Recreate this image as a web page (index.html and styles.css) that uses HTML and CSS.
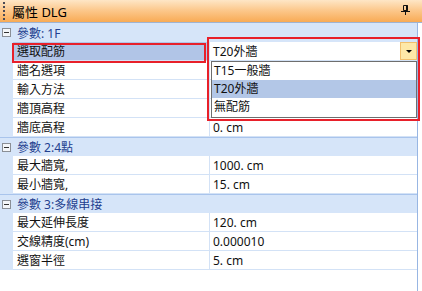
FILE: index.html
```html
<!DOCTYPE html>
<html lang="zh-Hant">
<head>
  <meta charset="UTF-8">
  <title>屬性 DLG</title>
  <link rel="stylesheet" href="styles.css">
</head>
<body>
  <div class="panel">
    <!-- Title Bar -->
    <div class="titlebar">
      <span class="grip"></span>
      <span class="title">屬性 DLG</span>
      <svg class="pin" width="9" height="10" viewBox="0 0 9 10">
        <path d="M2.5 0.5h4v5h-4z" fill="none" stroke="#111" stroke-width="1"/>
        <path d="M5 0v6h1.5V0z" fill="#111"/>
        <path d="M0 6h9v1H0z" fill="#111"/>
        <path d="M4 7h1v3H4z" fill="#111"/>
      </svg>
    </div>

    <!-- Property Grid -->
    <div class="grid">
      <div class="cat"><span class="toggle"></span><span class="cat-name">參數: 1F</span></div>
      <div class="row">
        <div class="gutter"></div>
        <div class="name selected">選取配筋</div>
        <div class="value combo">
          <span class="combo-text">T20外牆</span>
          <span class="combo-btn"><span class="arrow"></span></span>
        </div>
      </div>
      <div class="row"><div class="gutter"></div><div class="name">牆名選項</div><div class="value"></div></div>
      <div class="row"><div class="gutter"></div><div class="name">輸入方法</div><div class="value"></div></div>
      <div class="row"><div class="gutter"></div><div class="name">牆頂高程</div><div class="value"></div></div>
      <div class="row"><div class="gutter"></div><div class="name">牆底高程</div><div class="value">0. cm</div></div>

      <div class="cat split"><span class="toggle"></span><span class="cat-name">參數 2:4點</span></div>
      <div class="row"><div class="gutter"></div><div class="name">最大牆寬,</div><div class="value">1000. cm</div></div>
      <div class="row"><div class="gutter"></div><div class="name">最小牆寬,</div><div class="value">15. cm</div></div>

      <div class="cat split"><span class="toggle"></span><span class="cat-name">參數 3:多線串接</span></div>
      <div class="row"><div class="gutter"></div><div class="name">最大延伸長度</div><div class="value">120. cm</div></div>
      <div class="row"><div class="gutter"></div><div class="name">交線精度(cm)</div><div class="value">0.000010</div></div>
      <div class="row"><div class="gutter"></div><div class="name">選窗半徑</div><div class="value">5. cm</div></div>
    </div>

    <!-- Open combo list -->
    <ul class="dropdown">
      <li>T15一般牆</li>
      <li class="active">T20外牆</li>
      <li>無配筋</li>
    </ul>

    <!-- Red highlight marks -->
    <div class="mark mark-name"></div>
    <div class="mark mark-combo"></div>
  </div>
</body>
</html>
```

FILE: styles.css
```css
/* Reset */
* {
  margin: 0;
  padding: 0;
  box-sizing: border-box;
}

body {
  background: #fff;
  font-family: "Noto Sans", "Noto Sans CJK TC", sans-serif;
  font-size: 12px;
  color: #111;
}

/* Panel */
.panel {
  position: relative;
  width: 422px;
  height: 291px;
  overflow: hidden;
  background: #fff;
}

/* Title Bar */
.titlebar {
  height: 23px;
  display: flex;
  align-items: center;
  padding: 0 12px 0 3px;
  border-bottom: 1px solid #9fb3d1;
  background: linear-gradient(#fee6c6, #fcc98e 45%, #f8ab55);
}

.grip {
  width: 2px;
  height: 18px;
  background: repeating-linear-gradient(to bottom, #4a4a55 0 2px, transparent 2px 4px);
}

.title {
  flex: 1;
  margin-left: 7px;
  font-size: 13px;
  color: #000;
}

.pin {
  display: block;
  margin-top: -2px;
}

/* Grid */
.grid {
  width: 418px;
  height: 268px;
  border-right: 1px solid #98b6e3;
}

.cat {
  height: 19px;
  display: flex;
  align-items: center;
  background: #d6e5f9;
  color: #23408f;
}

.cat.split {
  border-top: 1px solid #a9c4ec;
}

.toggle {
  position: relative;
  width: 9px;
  height: 9px;
  margin-left: 2px;
  border: 1px solid #8b8f96;
  background: #f4f6f9;
}

.toggle::after {
  content: "";
  position: absolute;
  left: 1px;
  top: 3px;
  width: 5px;
  height: 1px;
  background: #333;
}

.cat-name {
  margin-left: 6px;
}

.row {
  display: flex;
  height: 19px;
}

.gutter {
  width: 13px;
  background: #d6e5f9;
}

.name {
  width: 197px;
  display: flex;
  align-items: center;
  padding-left: 4px;
  border-right: 1px solid #d3e2f6;
  border-bottom: 1px solid #d3e2f6;
  white-space: nowrap;
}

.name.selected {
  background: #b1c5e7;
}

.value {
  flex: 1;
  display: flex;
  align-items: center;
  padding-left: 3px;
  border-bottom: 1px solid #d3e2f6;
  white-space: nowrap;
}

/* Combo box */
.combo {
  justify-content: space-between;
  padding-right: 0;
}

.combo-btn {
  width: 17px;
  height: 18px;
  display: flex;
  align-items: center;
  justify-content: center;
  background: #fee8a8;
  border: 1px solid #f2bf6c;
}

.arrow {
  width: 0;
  height: 0;
  border-left: 3px solid transparent;
  border-right: 3px solid transparent;
  border-top: 3px solid #000;
}

.dropdown {
  position: absolute;
  left: 211px;
  top: 61px;
  width: 206px;
  height: 57px;
  list-style: none;
  background: #fff;
  border: 1px solid #6e6e6e;
}

.dropdown li {
  height: 18px;
  line-height: 18px;
  padding-left: 2px;
}

.dropdown li.active {
  background: #b3c7e7;
}

/* Red annotation boxes */
.mark {
  position: absolute;
  border: 2px solid #e8202a;
}

.mark-name {
  left: 12px;
  top: 43px;
  width: 194px;
  height: 20px;
}

.mark-combo {
  left: 207px;
  top: 37px;
  width: 213px;
  height: 84px;
}
```
